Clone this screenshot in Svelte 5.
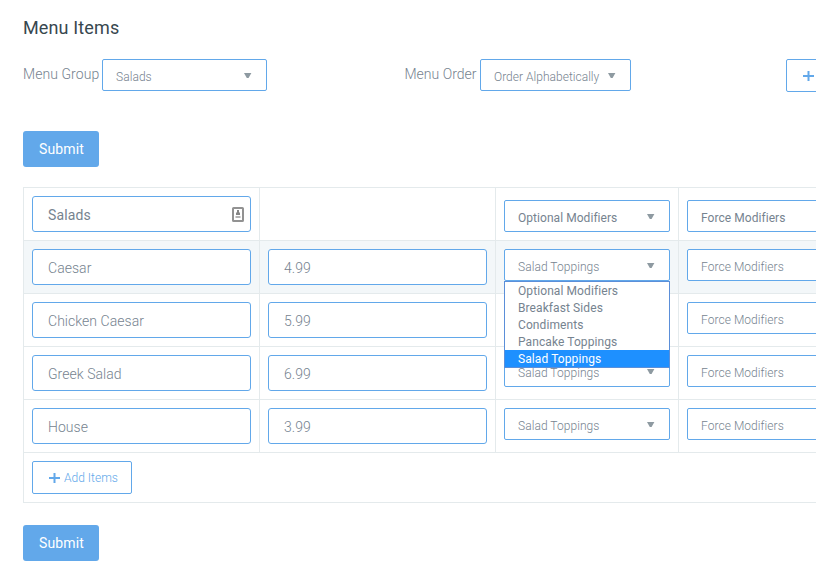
<script>
  const rows = [
    { name: 'Caesar', price: '4.99', open: true },
    { name: 'Chicken Caesar', price: '5.99' },
    { name: 'Greek Salad', price: '6.99' },
    { name: 'House', price: '3.99' }
  ];
  const options = ['Optional Modifiers', 'Breakfast Sides', 'Condiments', 'Pancake Toppings', 'Salad Toppings'];
</script>

{#snippet select(label, cls)}
  <div class="select {cls}">
    <span>{label}</span>
    <svg class="arrow" width="8" height="5" viewBox="0 0 8 5"><path d="M0 0h7.4L4.6 5H2.8z" fill="#8e9aa1" /></svg>
  </div>
{/snippet}

{#snippet plus()}
  <svg class="plus" width="11" height="10" viewBox="0 0 11 10"><path d="M0 5h11M5.5 0v10" stroke="#62a8ea" stroke-width="2" /></svg>
{/snippet}

<main>
  <h1>Menu Items</h1>
  <div class="filters">
    <div class="filter group"><label>Menu Group</label>{@render select('Salads', 'w-group')}</div>
    <div class="filter order"><label>Menu Order</label>{@render select('Order Alphabetically', 'w-order')}</div>
    <button class="outline top" aria-label="Add">{@render plus()}</button>
  </div>
  <button class="submit">Submit</button>

  <div class="table">
    <div class="row head">
      <div class="cell">
        <div class="input">
          <span>Salads</span>
          <svg width="12" height="15" viewBox="0 0 12 15">
            <rect x="1" y="1" width="10" height="13" rx="0.6" fill="#fff" stroke="#929292" stroke-width="2" />
            <path d="M5 3h2v2l1 1v2H4V6l1-1z" fill="#858585" />
            <path d="M3.5 9h5v2h-5z" fill="#b3b3b3" />
          </svg>
        </div>
      </div>
      <div class="cell"></div>
      <div class="cell">{@render select('Optional Modifiers', '')}</div>
      <div class="cell">{@render select('Force Modifiers', '')}</div>
    </div>
    {#each rows as row, i}
      <div class="row" class:active={row.open}>
        <div class="cell"><div class="input"><span>{row.name}</span></div></div>
        <div class="cell"><div class="input"><span>{row.price}</span></div></div>
        <div class="cell">
          {@render select(i === 1 ? '' : 'Salad Toppings', '')}
          {#if row.open}
            <ul>
              {#each options as option}
                <li class:chosen={option === 'Salad Toppings'}>{option}</li>
              {/each}
            </ul>
          {/if}
        </div>
        <div class="cell">{@render select('Force Modifiers', '')}</div>
      </div>
    {/each}
    <div class="foot"><button class="outline">{@render plus()}<span>Add Items</span></button></div>
  </div>
  <button class="submit">Submit</button>
</main>

<style>
  :global(body) { margin: 0; background: #fff; }
  main {
    width: 816px; height: 582px; overflow: hidden; box-sizing: border-box;
    padding: 15px 0 0 23px;
    font: 300 14px/22px Roboto, sans-serif; color: #76838f;
  }
  h1 { margin: 0; font-size: 18px; line-height: 25px; font-weight: 400; color: #37474f; letter-spacing: 0.14px; }
  .filters { display: flex; width: 1000px; height: 33px; margin-top: 19px; }
  .filter { display: flex; }
  .group { width: 381.5px; }
  .order { width: 381.5px; }
  label { line-height: 30px; white-space: nowrap; width: 79px; letter-spacing: 0.06px; }
  .order label { width: 75.5px; letter-spacing: 0; }
  button { font-family: inherit; margin: 0; }
  .submit {
    display: block; width: 76px; height: 36px; padding: 0; margin-top: 39px;
    border: 0; border-radius: 3px; background: #62a8ea; color: #fff;
    font-size: 14px; font-weight: 400; letter-spacing: 0.1px; text-indent: 1px;
  }
  .select, .input, .outline {
    box-sizing: border-box; display: flex; background: #fff; border: 1px solid #62a8ea;
  }
  .select {
    height: 32px; padding: 4px 14px 0 13px; border-radius: 2px;
    align-items: center; justify-content: space-between; font-size: 12px; white-space: nowrap; letter-spacing: 0.05px;
  }
  .w-group { width: 165px; }
  .w-order { width: 151px; }
  .w-order, .w-group { padding-right: 14px; }
  .w-order { letter-spacing: 0.02px; }
  .arrow { margin: -3px 0 0 auto; }
  .input {
    height: 36px; padding: 1px 6px 0 15px; border-radius: 3px;
    align-items: center; justify-content: space-between; letter-spacing: 0.04px;
  }
  .head .input { letter-spacing: 0.12px; }
  .table { width: 920px; margin-top: 20px; border: 1px solid #e4eaec; box-sizing: border-box; }
  .row { display: grid; grid-template-columns: 236px 236px 183px 264px; height: 52px; border-bottom: 1px solid #e4eaec; }
  .cell { box-sizing: border-box; padding: 8px; border-right: 1px solid #e4eaec; position: relative; }
  .active { background: #f3f7f9; }
  .head { font-weight: 400; }
  .head .select { margin-top: 4px; }
  ul {
    position: absolute; z-index: 2; left: 8px; right: 8px; top: 40px; margin: 0; padding: 0;
    list-style: none; background: #fff; border: 1px solid #5b8fd9;
  }
  li { box-sizing: border-box; height: 17px; padding: 1px 0 0 13px; font-size: 12px; line-height: 17px; font-weight: 400; letter-spacing: 0.09px; }
  .chosen { background: #1e90ff; color: #fff; }
  .foot { padding: 8px; height: 33px; }
  .outline {
    width: 100px; height: 33px; padding: 0 0 0 16px; align-items: center; gap: 4px;
    border-radius: 2px; color: #62a8ea; font-size: 12px; font-weight: 300; white-space: nowrap; letter-spacing: 0.02px;
  }
  .plus { flex: none; margin-top: 1px; }
  .table + .submit { margin-top: 22px; }
</style>
